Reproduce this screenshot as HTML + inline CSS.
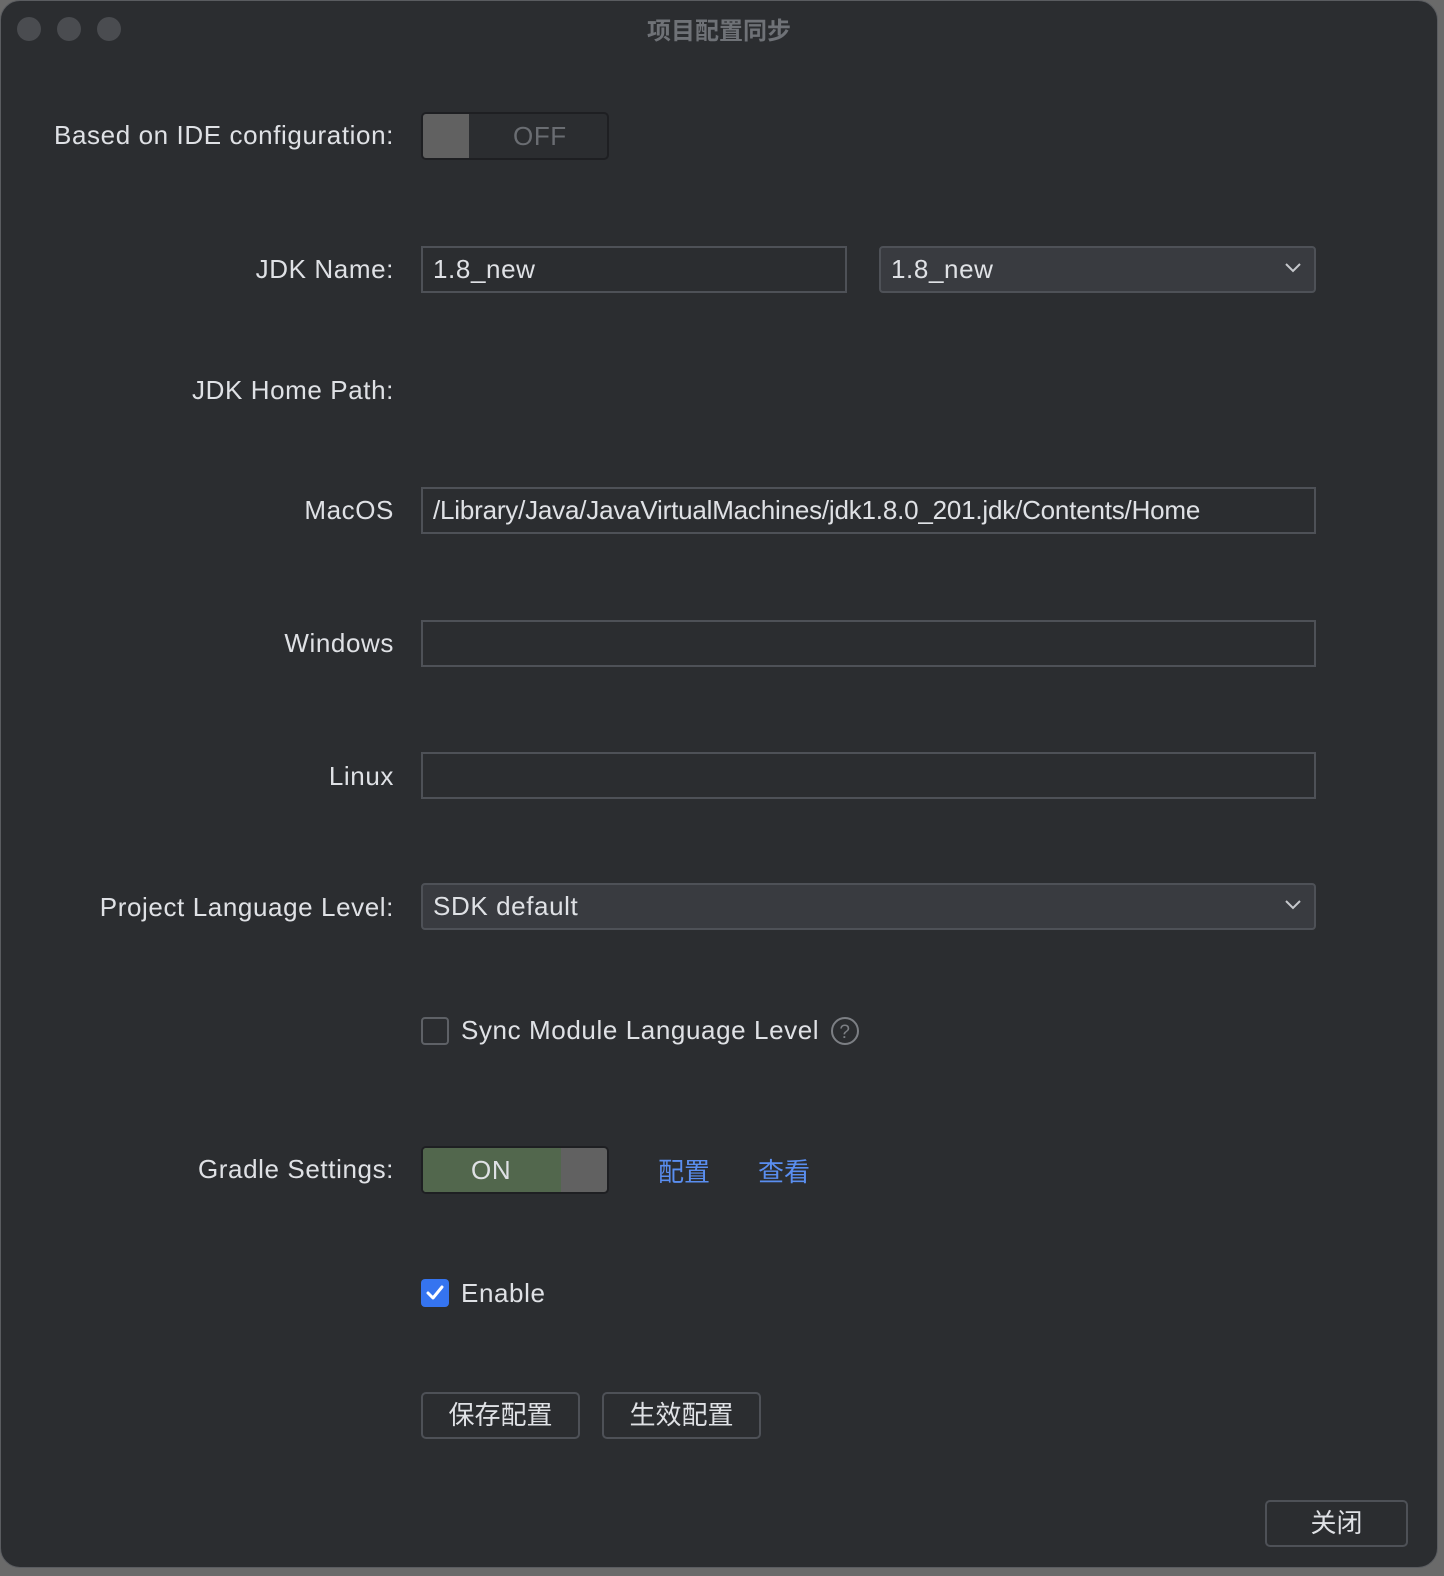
<!DOCTYPE html>
<html><head><meta charset="utf-8"><style>
*{box-sizing:border-box;margin:0;padding:0}
html,body{width:1444px;height:1576px;background:#6a6a6a;overflow:hidden}
body{font-family:"Liberation Sans","Noto Sans CJK SC",sans-serif;color:#dfe1e5;font-size:26px;letter-spacing:0.6px}
.win{position:absolute;left:0;top:0;width:1438px;height:1568px;background:#2b2d30;border:1px solid #5a5c60;border-radius:20px}
.dot{position:absolute;top:16px;width:24px;height:24px;border-radius:50%;background:#4a4c50}
.title{position:absolute;top:10px;left:0;width:1436px;text-align:center;color:#6f7277;font-size:24px;font-weight:bold;letter-spacing:0}
.lbl{position:absolute;right:1043px;white-space:nowrap;line-height:30px}
.in{position:absolute;border:2px solid #4e5157;background:#2b2d30;padding-left:10px;line-height:42px;white-space:nowrap}
.dd{position:absolute;border:2px solid #4e5157;background:#393b40;border-radius:4px;padding-left:10px;line-height:42px}
.dd svg{position:absolute;right:12px;top:14px}
.tog{position:absolute;left:420px;width:188px;height:48px;border:2px solid #1e1f22;border-radius:5px;overflow:hidden}
.cb{position:absolute;left:420px;width:28px;height:28px;border-radius:4px}
.btn{position:absolute;border:2px solid #4e5157;border-radius:5px;text-align:center;line-height:42px;height:47px;letter-spacing:0}
.lnk{position:absolute;color:#5a8ef0;top:1151px;letter-spacing:0}
</style></head><body>
<div class="win">
<div class="dot" style="left:16px"></div><div class="dot" style="left:56px"></div><div class="dot" style="left:96px"></div>
<div class="title">项目配置同步</div>

<div class="lbl" style="top:119px">Based on IDE configuration:</div>
<div class="tog" style="top:111px;background:#2b2d30">
 <div style="position:absolute;left:0;top:0;width:46px;height:44px;background:#616161"></div>
 <div style="position:absolute;left:90px;top:7px;color:#6a6d72">OFF</div>
</div>

<div class="lbl" style="top:253px">JDK Name:</div>
<div class="in" style="left:420px;top:245px;width:426px;height:47px">1.8_new</div>
<div class="dd" style="left:878px;top:245px;width:437px;height:47px">1.8_new<svg width="18" height="12" viewBox="0 0 18 12"><path d="M2 2l7 7 7-7" fill="none" stroke="#c6c8cc" stroke-width="2"/></svg></div>

<div class="lbl" style="top:374px">JDK Home Path:</div>

<div class="lbl" style="top:494px">MacOS</div>
<div class="in" style="left:420px;top:486px;width:895px;height:47px;letter-spacing:-0.2px">/Library/Java/JavaVirtualMachines/jdk1.8.0_201.jdk/Contents/Home</div>

<div class="lbl" style="top:627px">Windows</div>
<div class="in" style="left:420px;top:619px;width:895px;height:47px"></div>

<div class="lbl" style="top:760px">Linux</div>
<div class="in" style="left:420px;top:751px;width:895px;height:47px"></div>

<div class="lbl" style="top:891px">Project Language Level:</div>
<div class="dd" style="left:420px;top:882px;width:895px;height:47px">SDK default<svg width="18" height="12" viewBox="0 0 18 12"><path d="M2 2l7 7 7-7" fill="none" stroke="#c6c8cc" stroke-width="2"/></svg></div>

<div class="cb" style="top:1016px;border:2px solid #5e6166"></div>
<div style="position:absolute;left:460px;top:1014px;line-height:30px">Sync Module Language Level</div>
<svg style="position:absolute;left:829px;top:1015px" width="30" height="30" viewBox="0 0 30 30"><circle cx="15" cy="15" r="13" fill="none" stroke="#7c7f84" stroke-width="2"/><text x="15" y="22" text-anchor="middle" font-size="19" fill="#7c7f84" font-family="Liberation Sans">?</text></svg>

<div class="lbl" style="top:1153px">Gradle Settings:</div>
<div class="tog" style="top:1145px;background:#616161">
 <div style="position:absolute;left:0;top:0;width:138px;height:44px;background:#52674d"></div>
 <div style="position:absolute;left:48px;top:7px;color:#dfe1e5">ON</div>
</div>
<div class="lnk" style="left:657px">配置</div>
<div class="lnk" style="left:757px">查看</div>

<div class="cb" style="top:1278px;background:#3574f0"><svg width="28" height="28" viewBox="0 0 28 28"><path d="M7 14l5 5 9-11" fill="none" stroke="#fff" stroke-width="3" stroke-linecap="round" stroke-linejoin="round"/></svg></div>
<div style="position:absolute;left:460px;top:1277px;line-height:30px">Enable</div>

<div class="btn" style="left:420px;top:1391px;width:159px">保存配置</div>
<div class="btn" style="left:601px;top:1391px;width:159px">生效配置</div>
<div class="btn" style="left:1264px;top:1499px;width:143px">关闭</div>
</div>
</body></html>
